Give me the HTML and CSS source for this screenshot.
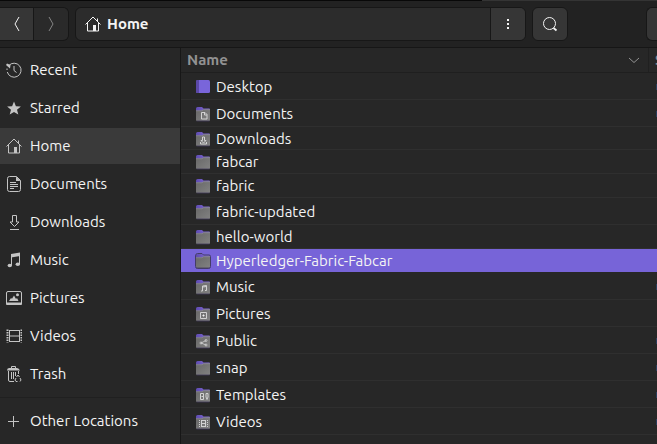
FILE: index.html
```html
<!DOCTYPE html>
<html lang="en">
<head>
<meta charset="utf-8">
<title>Home</title>
<link rel="stylesheet" href="styles.css">
</head>
<body>
<svg class="defs" aria-hidden="true">
  <defs>
    <linearGradient id="gray" x1="0" y1="0" x2="1" y2="1"><stop offset="0" stop-color="#686868"/><stop offset="1" stop-color="#828282"/></linearGradient>
    <linearGradient id="tab" x1="0" y1="0" x2="1" y2="0"><stop offset="0" stop-color="#5e4bb0"/><stop offset="1" stop-color="#8770dc"/></linearGradient>
    <symbol id="folder" viewBox="0 0 16 16">
      <path d="M1 2.500q0-1.500 1.500-1.500h4.500l1.500 1.500h5.500q1 0 1 1v3H1z" fill="url(#tab)"/>
      <path d="M1 4.500h6l1.500-1H15V14q0 1-1 1H2q-1 0-1-1z" fill="url(#gray)"/>
      <path d="M1 4.800h6l1.500-1H15" fill="none" stroke="#8e8e8e" stroke-width=".7"/>
      <path d="M1.500 15h13" stroke="#403958" stroke-width=".8"/>
    </symbol>
    <symbol id="home" viewBox="0 0 16 16">
      <path d="M.5 8.500 8 1l7.500 7.500M2.500 7v8h11V7M12.500 5V2.500" fill="none" stroke="currentColor"/>
      <path d="M8 9h3v6H8z" fill="currentColor"/>
    </symbol>
  </defs>
</svg>
<div class="window">
  <header class="toolbar">
    <div class="group history">
      <button class="btn back" aria-label="Back"><svg class="icon" viewBox="0 0 16 16"><path d="M10 1 6 8l4 7"/></svg></button>
      <button class="btn forward" aria-label="Forward"><svg class="icon" viewBox="0 0 16 16"><path d="m6 1 4 7-4 7"/></svg></button>
    </div>
    <div class="group path">
      <button class="crumb"><svg class="icon"><use href="#home"/></svg>Home</button>
      <button class="btn more" aria-label="Folder menu"><svg class="icon" viewBox="0 0 16 16"><path class="fill" d="M7 3h2v2H7zM7 7h2v2H7zM7 11h2v2H7z"/></svg></button>
    </div>
    <button class="btn single" aria-label="Search"><svg class="icon" viewBox="0 0 16 16"><circle cx="7.500" cy="7.500" r="6"/><path d="m11.500 12 3 2.500" stroke-width="1.800"/></svg></button>
    <button class="btn edge" aria-label="View"></button>
  </header>
  <div class="body">
    <nav class="sidebar">
      <a href="#"><svg class="icon" viewBox="0 0 16 16"><path d="M2.700 3.700A7 7 0 1 1 1.300 10M8 4v4.500l2.500 2"/><path class="fill" d="M0 3l1-1.500L4.500 3 4 6.500z"/><path d="M1 6.500v1.500"/></svg>Recent</a>
      <a href="#"><svg class="icon" viewBox="0 0 16 16"><path class="fill" d="m8 1.500 1.900 4.700 5 .3-3.900 3.200 1.300 4.900L8 11.900l-4.300 2.700L5 9.700 1.100 6.500l5-.3z"/></svg>Starred</a>
      <a href="#" class="active" aria-current="page"><svg class="icon"><use href="#home"/></svg>Home</a>
      <a href="#"><svg class="icon" viewBox="0 0 16 16"><path d="M10.500.5h-7Q1.500.5 1.500 2.500v11q0 2 2 2h9q2 0 2-2V4.500z"/><path class="fill" d="M10 .5V5h4.500z"/><path d="M4 6.500h6M4 8.500h8M4 10.500h8M4 12.500h4"/></svg>Documents</a>
      <a href="#"><svg class="icon" viewBox="0 0 16 16"><path d="M6.500 1.500h4V8H13l-4.500 4.500L4 8h2.500zM4 15.500h9"/></svg>Downloads</a>
      <a href="#"><svg class="icon" viewBox="0 0 16 16"><path d="M5.500 13.500V2.500M13.500 12V1.500"/><path class="fill" d="m5 2 9-1.500V4L5 5.500z"/><ellipse class="fill" cx="3.800" cy="13.500" rx="2.200" ry="1.800"/><ellipse class="fill" cx="11.800" cy="12.300" rx="2.200" ry="1.800"/></svg>Music</a>
      <a href="#"><svg class="icon" viewBox="0 0 16 16"><rect x=".5" y="1.500" width="15" height="13" rx="1.500"/><path class="fill" d="M0 12.500h16V14q0 1-1 1H1q-1 0-1-1zM3 11l2-3 1 .8L8 5.500 10 9l1-1 1.500 3z"/><circle class="fill" cx="11.500" cy="4.800" r="1.500"/></svg>Pictures</a>
      <a href="#"><svg class="icon" viewBox="0 0 16 16"><path d="M3.500 2v12M13.500 2v12M3 2.500h11M3 8h11M3 13.500h11"/><path d="M1.500 1.500v13M15.500 1.500v13" stroke-width="2" stroke-dasharray="1.500 1"/></svg>Videos</a>
      <a href="#"><svg class="icon" viewBox="0 0 16 16"><path d="M5.500 2.500V.5h4v2"/><path class="fill" d="M1 4.500Q1 2 3 2h8q2 0 3 2.500z"/><path d="M2.500 5v9q0 1.500 1.500 1.500h4M5.500 6v7M7.500 6v7M9.500 6v4M12.500 5v3"/><path d="m10.500 11 1.500-2 1.500 2M14 12l1 2-1 1.500M11.500 15.500H10L9 14l1-2"/></svg>Trash</a>
      <hr>
      <a href="#"><svg class="icon" viewBox="0 0 16 16"><path d="M2 8.500h11M7.500 3v11"/></svg>Other Locations</a>
    </nav>
    <main class="files">
      <table>
        <thead>
          <tr><th class="name"><button class="sort">Name<svg class="icon" viewBox="0 0 16 16"><path d="m3 6 5 4.500L13 6"/></svg></button></th><th class="size">S</th></tr>
        </thead>
        <tbody>
          <tr class="tall"><td><span class="file"><svg class="icon" viewBox="0 0 16 16"><g stroke="none"><rect x="1" y="1" width="14" height="13" rx="1.500" fill="#7965da"/><path d="M1 2.500Q1 1 2.500 1H4v13H2.500Q1 14 1 12.500z" fill="#5b48a8"/></g></svg>Desktop</span></td><td class="size"><i class="mark"></i></td></tr>
          <tr class="tall"><td><span class="file"><svg class="icon" viewBox="0 0 16 16"><use href="#folder"/><path class="emblem" d="M6.500 6.500h3.500l2 2v4.500H6.500zM9.500 6.500V9H12"/></svg>Documents</span></td><td class="size"><i class="mark"></i></td></tr>
          <tr class="compact"><td><span class="file"><svg class="icon" viewBox="0 0 16 16"><use href="#folder"/><path class="emblem" d="M7.500 6h2v3.500H11L8.500 12 6 9.500h1.500zM5.500 11v2h6v-2"/></svg>Downloads</span></td><td class="size"></td></tr>
          <tr><td><span class="file"><svg class="icon"><use href="#folder"/></svg>fabcar</span></td><td class="size"></td></tr>
          <tr><td><span class="file"><svg class="icon"><use href="#folder"/></svg>fabric</span></td><td class="size"></td></tr>
          <tr class="tall"><td><span class="file"><svg class="icon"><use href="#folder"/></svg>fabric-updated</span></td><td class="size"></td></tr>
          <tr><td><span class="file"><svg class="icon"><use href="#folder"/></svg>hello-world</span></td><td class="size"></td></tr>
          <tr class="selected"><td><span class="file"><svg class="icon" viewBox="0 0 16 16"><use href="#folder"/><path d="M.5 3q0-2.500 2-2.500h4.500L8.500 2h5.500q1.500 0 1.500 1.500v10q0 2-2 2h-11q-2 0-2-2z" fill="none" stroke="#443c66"/></svg>Hyperledger-Fabric-Fabcar</span></td><td class="size"></td></tr>
          <tr class="tall"><td><span class="file"><svg class="icon" viewBox="0 0 16 16"><use href="#folder"/><path class="emblem" d="M7.500 12V7l4-.5v5M7.500 8l4-.5M6 12h1.500M10 11.500h1.500"/></svg>Music</span></td><td class="size"><i class="mark"></i></td></tr>
          <tr class="tall"><td><span class="file"><svg class="icon" viewBox="0 0 16 16"><use href="#folder"/><path class="emblem" d="M5.500 6.500h6v6h-6z"/><path d="M8 9h1v1H8z" fill="#ddd"/></svg>Pictures</span></td><td class="size"></td></tr>
          <tr class="tall"><td><span class="file"><svg class="icon" viewBox="0 0 16 16"><use href="#folder"/><path class="emblem thin" d="m6 10 5-2.500M6 10l5 2"/><g class="emblem thin"><circle cx="6" cy="10" r="1"/><circle cx="11" cy="7.500" r="1"/><circle cx="11" cy="12" r="1"/></g></svg>Public</span></td><td class="size"><i class="mark"></i></td></tr>
          <tr class="tall"><td><span class="file"><svg class="icon"><use href="#folder"/></svg>snap</span></td><td class="size"><i class="mark"></i></td></tr>
          <tr class="tall"><td><span class="file"><svg class="icon" viewBox="0 0 16 16"><use href="#folder"/><path class="emblem" d="M8.500 6.500h-3v6h3zM6.500 9.500H8M11 6.500h2v3.500l-1 2.500-1-2.500z"/></svg>Templates</span></td><td class="size"><i class="mark"></i></td></tr>
          <tr class="tall"><td><span class="file"><svg class="icon" viewBox="0 0 16 16"><use href="#folder"/><path class="emblem" d="M6.500 6v7M10.500 6v7M6 6.500h5M6 9.500h5M6 12.500h5"/><path class="emblem" d="M4.500 6v7M12.500 6v7" stroke-dasharray="1 1"/></svg>Videos</span></td><td class="size"><i class="mark"></i></td></tr>
        </tbody>
      </table>
    </main>
  </div>
</div>
</body>
</html>
```
FILE: styles.css
```css
* { box-sizing: border-box; }

body {
  margin: 0;
  background: #272727;
  color: #f4f4f4;
  font: 15px/20px Ubuntu, "Noto Sans", sans-serif;
  overflow: hidden;
}

button {
  border: 0;
  padding: 0;
  color: inherit;
  font: inherit;
  background: none;
}

.defs { position: absolute; width: 0; height: 0; }

.window {
  display: flex;
  flex-direction: column;
  min-height: 100vh;
}

.icon {
  width: 16px;
  height: 16px;
  flex: none;
  fill: none;
  stroke: currentColor;
}

.icon use { stroke: none; }
.icon .fill { fill: currentColor; stroke: none; }
.icon .emblem { stroke: #d2d2d2; fill: none; }
.icon .thin { stroke-width: .8; }

.toolbar {
  display: flex;
  height: 48px;
  padding-top: 7px;
  gap: 6px;
  align-items: flex-start;
  background: linear-gradient(90deg, #080808 482px, #343434 482px) top / 100% 1px no-repeat #222;
  border-bottom: 1px solid #161616;
}

.group {
  display: flex;
  height: 34px;
  border: 1px solid #171717;
  border-radius: 6px;
  overflow: hidden;
}

.btn {
  display: flex;
  align-items: center;
  justify-content: center;
  width: 33px;
  background: #363636;
}

.history { border-left: 0; border-radius: 0 6px 6px 0; }
.forward { width: 35px; color: #858585; background: #2a2a2a; border-left: 1px solid #171717; }

.path { flex: 1; background: #2c2c2c; }

.crumb {
  display: flex;
  flex: 1;
  align-items: center;
  gap: 6px;
  padding-left: 9px;
  font-weight: 700;
}

.more { width: 35px; border-left: 1px solid #171717; }

.single {
  width: 36px;
  height: 34px;
  border: 1px solid #171717;
  border-radius: 6px;
}

.edge {
  width: 11px;
  height: 34px;
  margin-left: 72px;
  border: 1px solid #171717;
  border-right: 0;
  border-radius: 6px 0 0 6px;
}

.body { display: flex; flex: 1; }

.sidebar {
  display: flex;
  flex-direction: column;
  gap: 2px;
  width: 181px;
  padding-top: 4px;
  border-right: 1px solid #171717;
}

.sidebar a {
  display: flex;
  align-items: center;
  gap: 8px;
  height: 36px;
  padding-left: 6px;
  color: inherit;
  text-decoration: none;
}

.sidebar .icon { color: #c4c4c4; }
.sidebar .active { background: #3a3a3a; }

.sidebar hr {
  width: 100%;
  height: 1px;
  margin: 3px 0;
  border: 0;
  background: #202020;
}

.files { flex: 1; min-width: 0; }

table {
  width: 100%;
  table-layout: fixed;
  border-collapse: separate;
  border-spacing: 0;
}

th, td {
  height: 24px;
  padding: 0;
  line-height: 20px;
  border-bottom: 1px solid #2f2f2f;
  background-clip: padding-box;
  white-space: nowrap;
}

th {
  height: 25px;
  color: #929292;
  text-align: left;
  border-bottom-color: #1f1f1f;
}

.tall td { height: 27px; padding-top: 1px; }
.compact td { height: 23px; padding-top: 1px; }

.size { width: 9px; overflow: hidden; }
th.size { padding-left: 6px; color: #7c8c98; border-left: 1px solid #202020; }

.sort {
  display: flex;
  align-items: center;
  justify-content: space-between;
  width: 100%;
  padding: 0 6px;
  font-weight: 700;
}

.file {
  display: flex;
  align-items: center;
  gap: 5px;
  padding-left: 14px;
}

.selected td {
  background-color: #7764d8;
  border-bottom-color: #272727;
}

.mark {
  display: block;
  width: 1px;
  height: 6px;
  margin-left: auto;
  background: #283d5c;
}
```
